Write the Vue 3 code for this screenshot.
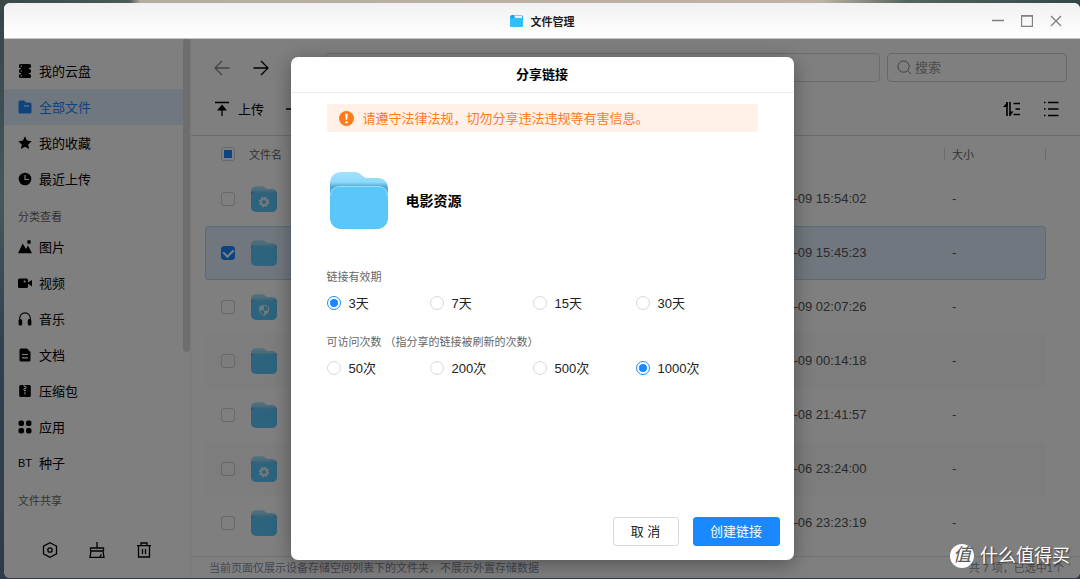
<script setup>
import { ref, computed } from 'vue'

const places = [
  { icon: 'disk', label: '我的云盘' },
  { icon: 'file', label: '全部文件', active: true },
  { icon: 'star', label: '我的收藏' },
  { icon: 'clock', label: '最近上传' },
]
const categories = [
  { icon: 'image', label: '图片' },
  { icon: 'video', label: '视频' },
  { icon: 'music', label: '音乐' },
  { icon: 'doc', label: '文档' },
  { icon: 'zip', label: '压缩包' },
  { icon: 'apps', label: '应用' },
  { icon: 'bt', label: '种子' },
]
const groups = [
  { title: '', items: places },
  { title: '分类查看', items: categories },
  { title: '文件共享', items: [] },
]
const files = ref([
  { id: 1, badge: 'gear', date: '10-09 15:54:02', checked: false },
  { id: 2, badge: '', date: '10-09 15:45:23', checked: true },
  { id: 3, badge: 'shield', date: '10-09 02:07:26', checked: false },
  { id: 4, badge: '', date: '10-09 00:14:18', checked: false },
  { id: 5, badge: '', date: '10-08 21:41:57', checked: false },
  { id: 6, badge: 'gear', date: '10-06 23:24:00', checked: false },
  { id: 7, badge: '', date: '10-06 23:23:19', checked: false },
])
const selected = computed(() => files.value.filter((f) => f.checked).length)
const days = ref(3)
const visits = ref(1000)
</script>

<template>
  <div class="desktop">
    <svg class="defs" aria-hidden="true">
      <defs>
        <linearGradient id="back" x1="0" y1="0" x2="0" y2="1">
          <stop offset="0" stop-color="#a2e2ff" />
          <stop offset="0.18" stop-color="#8fd8fb" />
          <stop offset="0.26" stop-color="#4fa9d6" />
          <stop offset="1" stop-color="#5bc6fa" />
        </linearGradient>
        <symbol id="folder" viewBox="0 0 58 57">
          <path fill="url(#back)" d="M0 12C0 5 4 0 11 0H25C32 0 31 6 38 6H47C54 6 58 10 58 17V44C58 52 54 57 46 57H12C4 57 0 52 0 44Z" />
          <path fill="#5bc6fa" d="M0 25C0 18 4 14 11 14H47C54 14 58 18 58 25V44C58 52 54 57 46 57H12C4 57 0 52 0 44Z" />
          <path fill="none" stroke="#9adcfc" stroke-width="1" d="M.5 24C.5 18 4 14.500 11 14.500H47C54 14.500 57.500 18 57.500 24" />
        </symbol>
      </defs>
    </svg>

    <div class="window">
      <header class="titlebar">
        <h1 class="app-name">
          <svg class="app-icon" viewBox="0 0 13 13" aria-hidden="true">
            <rect width="13" height="12" y="1" rx="2" fill="#1ba4f5" />
            <path fill="#e4f7ff" d="M4 1.500h8v4H6Z" />
            <path fill="#2fc0fb" d="M0 4h13v7a2 2 0 0 1-2 2H2a2 2 0 0 1-2-2Z" />
          </svg>
          文件管理
        </h1>
        <div class="controls">
          <button type="button" aria-label="最小化"><svg viewBox="0 0 12 12"><path d="M0 5.500h12" /></svg></button>
          <button type="button" aria-label="最大化"><svg viewBox="0 0 12 12"><path d="M.5.5h11v11H.5ZM.5 1.200h11" /></svg></button>
          <button type="button" aria-label="关闭"><svg viewBox="0 0 12 12"><path d="M1 1l10 10M11 1L1 11" /></svg></button>
        </div>
      </header>

      <div class="body">
        <aside class="sidebar">
          <nav class="places">
            <template v-for="g in groups" :key="g.title">
              <h2 v-if="g.title">{{ g.title }}</h2>
              <a v-for="i in g.items" :key="i.label" href="#" :class="{ active: i.active }">
                <span v-if="i.icon === 'bt'" class="bt">BT</span>
                <svg v-else viewBox="0 0 14 14" aria-hidden="true">
                  <g v-if="i.icon === 'disk'">
                    <rect x="1" y="0" width="12" height="4" rx="1.500" /><rect x="1" y="5" width="12" height="4" rx="1.500" /><rect x="1" y="10" width="12" height="4" rx="1.500" />
                    <path d="M3 3h8v8H3Z" />
                    <path class="cut" d="M2.500 2h1.500M2.500 7h1.500M2.500 12h1.500" />
                  </g>
                  <g v-else-if="i.icon === 'file'">
                    <path d="M.5 2A1.500 1.500 0 0 1 2 .5h4l2 2h4A1.500 1.500 0 0 1 13.500 4v8a1.500 1.500 0 0 1-1.500 1.500H2A1.500 1.500 0 0 1 .5 12Z" />
                    <path class="cut" d="M6 6h5" />
                  </g>
                  <path v-else-if="i.icon === 'star'" d="M7 .3l2 4.300 4.700.6-3.500 3.200.9 4.700L7 10.800l-4.100 2.300.9-4.700L.3 5.200 5 4.600Z" />
                  <g v-else-if="i.icon === 'clock'">
                    <circle cx="7" cy="7" r="6.300" /><path class="cut" d="M7 3v4.500h4" />
                  </g>
                  <g v-else-if="i.icon === 'image'">
                    <circle cx="11" cy="2" r="1.900" />
                    <path d="M0 13.300L4.700 3.500 8 9l2-3.500 4 7.800Z" />
                  </g>
                  <g v-else-if="i.icon === 'video'">
                    <rect x="0" y="2.500" width="10" height="9.500" rx="1.500" /><path d="M9 7l5-3v6.500Z" />
                    <circle cx="6.700" cy="5.500" r="1.100" class="hole" />
                  </g>
                  <g v-else-if="i.icon === 'music'">
                    <path class="line" d="M1.700 9V6.200a5.300 5.300 0 0 1 10.600 0V9" />
                    <rect x=".6" y="7" width="3.600" height="6.500" rx="1.500" /><rect x="9.800" y="7" width="3.600" height="6.500" rx="1.500" />
                  </g>
                  <g v-else-if="i.icon === 'doc'">
                    <path d="M1.500 2A1.500 1.500 0 0 1 3 .5h6L12.500 4v8A1.500 1.500 0 0 1 11 13.500H3A1.500 1.500 0 0 1 1.500 12Z" />
                    <path class="cut" d="M4 6.500h6M4 9.800h6" />
                  </g>
                  <g v-else-if="i.icon === 'zip'">
                    <rect x="1.200" y="1" width="11.600" height="12" rx="1.500" />
                    <path class="cut thin" d="M6 1v1.500h2v2H6v2h2M7 7.500v3" />
                  </g>
                  <g v-else>
                    <rect x=".5" y=".5" width="5.500" height="5.500" rx="2" /><rect x="8" y=".5" width="5.500" height="5.500" rx="2" />
                    <rect x=".5" y="8" width="5.500" height="5.500" rx="2" /><rect x="8" y="8" width="5.500" height="5.500" rx="2" />
                  </g>
                </svg>
                <span class="text">{{ i.label }}</span>
              </a>
            </template>
          </nav>
          <div class="thumb"></div>
          <div class="tools">
            <button type="button" aria-label="设置"><svg viewBox="0 0 16 16"><path d="M8 .7l6.500 3.500v7.600L8 15.300 1.500 11.800V4.200Z" /><circle cx="8" cy="8" r="2.200" /></svg></button>
            <button type="button" aria-label="清理"><svg viewBox="0 0 16 16"><path d="M8 0v6M1.500 9V6h13v3M1.500 9h13M2 9L1 15.300h14L14 9M10.500 15.300c1.200-.8 1.500-1.500 1.500-3" /></svg></button>
            <button type="button" aria-label="回收站"><svg viewBox="0 0 16 16"><path d="M1 3.700h14M5 3.700V1h6v2.700M2.500 3.700V15h11V3.700M6.500 7v5M9.500 7v5" /></svg></button>
          </div>
        </aside>

        <main class="main">
          <div class="nav-row">
            <button type="button" class="dim" aria-label="后退"><svg viewBox="0 0 16 16"><path d="M15.500 8H1.500M8 1L1 8l7 7" /></svg></button>
            <button type="button" aria-label="前进"><svg viewBox="0 0 16 16"><path d="M.5 8h14M8 1l7 7-7 7" /></svg></button>
            <input class="address" type="text" aria-label="路径" />
            <label class="search">
              <svg viewBox="0 0 16 16" aria-hidden="true"><circle cx="7" cy="7" r="6" /><path d="M11.500 11.500L15 15" /></svg>
              <input type="search" placeholder="搜索" aria-label="搜索" />
            </label>
          </div>

          <div class="toolbar">
            <button type="button"><svg viewBox="0 0 16 16" aria-hidden="true"><path d="M1 1.500h14M8 6v9" /><path class="solid" d="M8 3.500l5 6H3Z" /></svg>上传</button>
            <button type="button"><svg viewBox="0 0 16 16" aria-hidden="true"><path d="M0 8h16M8 0v16" /></svg>新建</button>
            <div class="views">
              <button type="button" aria-label="排序"><svg class="wide" viewBox="0 0 18 16"><path d="M4 1v14M7 1v14M10.500 2.500H17M12.500 8H17M10.500 13.500H17" /><path class="solid" d="M0 6L4.500 1v5ZM6.500 10.500h4L7 15Z" /></svg></button>
              <button type="button" aria-label="列表"><svg viewBox="0 0 16 16"><path d="M1 1.500h1.500M1 8h1.500M1 14.500h1.500M5 1.500h10.500M5 8h10.500M5 14.500h10.500" /></svg></button>
            </div>
          </div>

          <table class="files">
            <colgroup><col class="c-check" /><col /><col class="c-date" /><col class="c-size" /></colgroup>
            <thead>
              <tr>
                <th class="check"><input type="checkbox" aria-label="全选" :indeterminate.prop="selected > 0" /></th>
                <th>文件名</th>
                <th></th>
                <th class="sep">大小</th>
              </tr>
            </thead>
            <tbody>
              <tr v-for="f in files" :key="f.id" :class="{ selected: f.checked }">
                <td class="check"><input v-model="f.checked" type="checkbox" aria-label="选择文件夹" /></td>
                <td class="name">
                  <svg viewBox="0 0 26 26" aria-hidden="true">
                    <use href="#folder" width="26" height="26" />
                    <g v-if="f.badge === 'gear'">
                      <circle cx="13" cy="16" r="3.200" fill="none" stroke="#dff1fa" stroke-width="2.400" />
                      <circle cx="13" cy="16" r="4.600" fill="none" stroke="#dff1fa" stroke-width="1.400" stroke-dasharray="2 1.613" />
                    </g>
                    <g v-if="f.badge === 'shield'">
                      <path fill="none" stroke="#dff1fa" d="M13 11.200l4.500 1.600v3.500c0 2.300-2 4-4.500 5-2.500-1-4.500-2.700-4.500-5v-3.500Z" />
                      <path fill="#dff1fa" d="M13 11v5.500H8.500v-4ZM13 16.500h4.500c0 2-2 4-4.500 5Z" />
                    </g>
                  </svg>
                </td>
                <td>{{ f.date }}</td>
                <td>-</td>
              </tr>
            </tbody>
          </table>

          <footer class="status">
            <span>当前页面仅展示设备存储空间列表下的文件夹，不展示外置存储数据</span>
            <span>共 {{ files.length }} 项，已选中{{ selected }}个</span>
          </footer>
        </main>

        <div class="overlay">
          <form class="dialog" role="dialog" aria-labelledby="share-title" @submit.prevent>
            <h2 id="share-title">分享链接</h2>
            <div class="content">
              <p class="notice">
                <svg viewBox="0 0 15 15" aria-hidden="true"><circle cx="7.500" cy="7.500" r="7.500" fill="#ff7a1a" /><path fill="#fff" d="M6.300 2.800h2.400l-.4 6H6.700Z" /><circle cx="7.500" cy="11.200" r="1.200" fill="#fff" /></svg>
                <span class="text">请遵守法律法规，切勿分享违法违规等有害信息。</span>
              </p>
              <div class="target">
                <svg viewBox="0 0 58 57" aria-hidden="true"><use href="#folder" width="58" height="57" /></svg>
                <strong class="text">电影资源</strong>
              </div>
              <fieldset>
                <legend>链接有效期</legend>
                <div class="options">
                  <label v-for="d in [3, 7, 15, 30]" :key="d"><input v-model="days" type="radio" name="days" :value="d" /><span class="text">{{ d }}天</span></label>
                </div>
              </fieldset>
              <fieldset>
                <legend>可访问次数 （指分享的链接被刷新的次数）</legend>
                <div class="options">
                  <label v-for="v in [50, 200, 500, 1000]" :key="v"><input v-model="visits" type="radio" name="visits" :value="v" /><span class="text">{{ v }}次</span></label>
                </div>
              </fieldset>
            </div>
            <div class="actions">
              <button type="button" class="cancel"><span class="text">取 消</span></button>
              <button type="submit" class="primary"><span class="text">创建链接</span></button>
            </div>
          </form>
        </div>
      </div>
    </div>

    <div class="watermark"><span class="seal">值</span><span>什么值得买</span></div>
  </div>
</template>

<style>
body {
  overflow: hidden;
}
</style>

<style scoped>
* {
  box-sizing: border-box;
}
.desktop {
  position: relative;
  display: flex;
  height: 100vh;
  padding: 3px 0 1px 4px;
  font-family: "Liberation Sans", "Noto Sans CJK SC", sans-serif;
  font-size: 13px;
  color: #000;
  background:
    linear-gradient(90deg, #3b4646 0, #4d5a58 12%, #b5aca2 13%, #bdb3a8 76%, #55645c 84%, #33474a 100%) top / 100% 12px no-repeat,
    linear-gradient(180deg, #35444a, #46585a 35%, #2f4050 60%, #2f3b4a);
}
.defs {
  position: absolute;
  width: 0;
  height: 0;
}
h1, h2, p, fieldset, legend {
  margin: 0;
  padding: 0;
  border: 0;
}
button {
  display: flex;
  align-items: center;
  justify-content: center;
  margin: 0;
  padding: 0;
  border: 0;
  background: none;
  color: inherit;
  font: inherit;
  white-space: nowrap;
}
.text {
  padding-bottom: 2px;
}
svg {
  display: block;
  flex: none;
}
button svg {
  width: 16px;
  height: 16px;
  fill: none;
  stroke: currentColor;
  stroke-width: 1.3;
}
.window {
  display: flex;
  flex: 1;
  flex-direction: column;
  overflow: hidden;
  border-radius: 6px;
  background: #fff;
}
.titlebar {
  position: relative;
  display: flex;
  flex: none;
  align-items: center;
  justify-content: center;
  height: 36px;
  border-bottom: 1px solid #c4c4c4;
  background: linear-gradient(#f1f1f1, #fff);
}
.app-name {
  display: flex;
  align-items: center;
  gap: 8px;
  font-size: 11px;
  color: #222;
}
.app-icon {
  width: 13px;
  height: 13px;
}
.controls {
  position: absolute;
  right: 18px;
  display: flex;
  gap: 17px;
  color: #808080;
}
.controls svg {
  width: 12px;
  height: 12px;
}
.body {
  position: relative;
  display: flex;
  flex: 1;
  min-height: 0;
}
.sidebar {
  position: relative;
  display: flex;
  flex: none;
  flex-direction: column;
  width: 187px;
  border-right: 1px solid #f0f0f0;
}
.places {
  flex: 1;
  min-height: 0;
  padding-top: 14px;
  overflow: hidden;
}
.places h2 {
  height: 32px;
  padding: 8px 14px 0;
  font-size: 11px;
  font-weight: 400;
  line-height: 24px;
  color: #666;
}
.places a {
  display: flex;
  align-items: center;
  gap: 7px;
  height: 36px;
  padding-left: 14px;
  color: #000;
  text-decoration: none;
}
.places a svg {
  width: 14px;
  height: 14px;
  fill: currentColor;
}
.places .active {
  background: #e3eefd;
  color: #1a88ff;
}
.bt {
  width: 14px;
  font-size: 11px;
}
.cut {
  fill: none;
  stroke: #fff;
  stroke-width: 1.2;
}
.thin {
  stroke-width: 1;
}
.hole {
  fill: #fff;
}
.line {
  fill: none;
  stroke: currentColor;
  stroke-width: 1.1;
}
.thumb {
  position: absolute;
  top: 0;
  right: 0;
  width: 7px;
  height: 58%;
  border-radius: 4px;
  background: #dcdcdc;
}
.tools {
  display: flex;
  flex: none;
  align-items: center;
  gap: 31px;
  height: 56px;
  padding-left: 38px;
}
.main {
  display: flex;
  flex: 1;
  flex-direction: column;
  min-width: 0;
}
.nav-row {
  display: flex;
  align-items: center;
  flex: none;
  height: 43px;
  padding: 14px 13px 0 23px;
}
.nav-row button {
  margin-right: 23px;
}
.dim {
  color: #888;
}
.address {
  flex: 1;
  min-width: 0;
  height: 29px;
  margin: 0 7px 0 33px;
  border: 1px solid #d9d9d9;
  border-radius: 4px;
  background: none;
}
.search {
  display: flex;
  align-items: center;
  gap: 3px;
  width: 180px;
  height: 29px;
  padding: 0 9px;
  border: 1px solid #cfcfcf;
  border-radius: 4px;
}
.search svg {
  width: 15px;
  height: 15px;
  fill: none;
  stroke: #777;
}
.search input {
  flex: 1;
  min-width: 0;
  padding: 0;
  border: 0;
  outline: 0;
  background: none;
  font: inherit;
}
.search input::placeholder {
  color: #999;
}
.toolbar {
  display: flex;
  flex: none;
  align-items: center;
  gap: 22px;
  height: 54px;
  padding: 0 21px 0 23px;
  border-bottom: 1px solid #d8d8d8;
}
.toolbar button {
  gap: 8px;
}
.views {
  display: flex;
  gap: 22px;
  margin-left: auto;
}
.views svg {
  stroke-width: 1.6;
}
.views .wide {
  width: 18px;
}
.solid {
  fill: currentColor;
  stroke: none;
}
.files {
  flex: none;
  margin: 0 34px 0 14px;
  border-spacing: 0;
  table-layout: fixed;
}
.c-check {
  width: 44px;
}
.c-date {
  width: 173px;
}
.c-size {
  width: 102px;
}
.files th {
  height: 36px;
  padding: 0;
  font-size: 11px;
  font-weight: 400;
  text-align: left;
  color: #666;
}
.files th.sep {
  padding-left: 8px;
  background:
    linear-gradient(#d8d8d8, #d8d8d8) left / 1px 12px no-repeat,
    linear-gradient(#d8d8d8, #d8d8d8) right / 1px 12px no-repeat;
}
.files td {
  height: 54px;
  padding: 0 8px 2px;
  color: #555;
}
.files .check {
  padding: 0 0 0 16px;
}
.files .name {
  padding: 0 2px;
}
.name svg {
  width: 26px;
  height: 26px;
}
.files tbody tr:nth-child(even) td {
  background: #fafafa;
}
.files tbody tr.selected td {
  border: 1px solid #aed5ff;
  border-width: 1px 0;
  background: #e3eefd;
}
.files tbody tr.selected td:first-child {
  padding-left: 15px;
  border-left-width: 1px;
  border-radius: 4px 0 0 4px;
}
.files tbody tr.selected td:last-child {
  border-right-width: 1px;
  border-radius: 0 4px 4px 0;
}
input[type="checkbox"],
input[type="radio"] {
  display: grid;
  flex: none;
  place-items: center;
  width: 14px;
  height: 14px;
  margin: 0;
  border: 1px solid #d0d0d0;
  border-radius: 3px;
  appearance: none;
}
input[type="checkbox"]:indeterminate::after {
  width: 8px;
  height: 8px;
  background: #1a88ff;
  content: "";
}
input[type="checkbox"]:checked {
  border-color: #1a88ff;
  background: #1a88ff;
}
input[type="checkbox"]:checked::after {
  width: 5px;
  height: 8px;
  margin-bottom: 2px;
  border: solid #fff;
  border-width: 0 2px 2px 0;
  content: "";
  transform: rotate(45deg);
}
input[type="radio"] {
  border-color: #d9d9d9;
  border-radius: 50%;
}
input[type="radio"]:checked {
  border-color: #1a88ff;
}
input[type="radio"]:checked::after {
  width: 8px;
  height: 8px;
  border-radius: 50%;
  background: #1a88ff;
  content: "";
}
.status {
  display: flex;
  flex: none;
  align-items: center;
  justify-content: space-between;
  height: 22px;
  margin-top: auto;
  padding: 0 16px 1px 18px;
  border-top: 1px solid #e4e4e4;
  font-size: 11px;
  color: #8a8fa3;
}
.overlay {
  position: absolute;
  inset: 0;
  display: flex;
  align-items: center;
  justify-content: center;
  background: rgba(0, 0, 0, 0.5);
}
.dialog {
  display: flex;
  flex-direction: column;
  width: 503px;
  min-height: 503px;
  border-radius: 7px;
  background: #fff;
  box-shadow: 0 4px 20px rgba(0, 0, 0, 0.35);
}
.dialog h2 {
  height: 36px;
  border-bottom: 1px solid #ececec;
  font-size: 13px;
  line-height: 35px;
  text-align: center;
}
.content {
  padding: 11px 36px;
}
.notice {
  display: flex;
  align-items: center;
  gap: 9px;
  height: 28px;
  padding-left: 12px;
  border-radius: 3px;
  background: #fff1e8;
  color: #ff7a1a;
}
.notice svg {
  width: 15px;
  height: 15px;
}
.target {
  display: flex;
  align-items: center;
  gap: 18px;
  margin: 40px 0;
  padding-left: 3px;
  font-size: 14px;
}
.target svg {
  width: 58px;
  height: 57px;
}
fieldset {
  min-width: 0;
  margin-bottom: 22px;
}
legend {
  font-size: 11px;
  line-height: 16px;
  color: #666;
}
.options {
  display: grid;
  grid-template-columns: repeat(4, 103px);
  padding-top: 9px;
}
.options label {
  display: flex;
  align-items: center;
  gap: 8px;
  height: 18px;
  color: #222;
}
.actions {
  display: flex;
  justify-content: flex-end;
  gap: 14px;
  margin-top: auto;
  padding: 14px;
}
.actions button {
  width: 66px;
  height: 29px;
  border: 1px solid #d9d9d9;
  border-radius: 3px;
  color: #222;
}
.actions .primary {
  width: 87px;
  border-color: #1a88ff;
  background: #1a88ff;
  color: #fff;
}
.watermark {
  position: absolute;
  right: 10px;
  bottom: 11px;
  display: flex;
  align-items: center;
  gap: 6px;
  font-size: 18px;
  line-height: 24px;
  color: #fff;
  text-shadow: 1px 1px 2px rgba(0, 0, 0, 0.6);
}
.seal {
  width: 24px;
  height: 24px;
  border-radius: 50%;
  background: #fff;
  color: #555;
  font-size: 18px;
  line-height: 22px;
  font-style: italic;
  text-align: center;
  text-shadow: none;
}
</style>
